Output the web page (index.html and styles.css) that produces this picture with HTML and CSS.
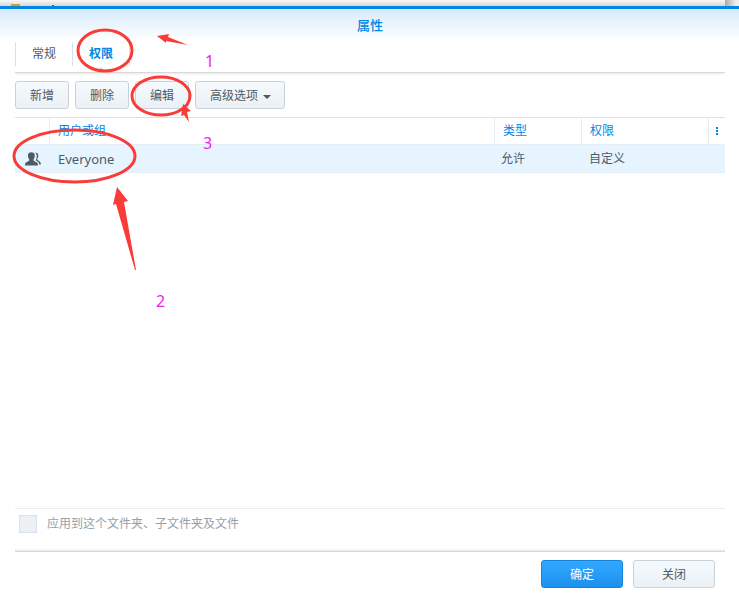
FILE: index.html
```html
<!DOCTYPE html>
<html lang="zh-CN">
<head>
<meta charset="utf-8">
<title>属性</title>
<link rel="stylesheet" href="styles.css">
</head>
<body>
<div class="backdrop"><svg class="backdrop-items" width="60" height="6" aria-hidden="true"><path d="M11 4h9v2h-9z" fill="#e39a1b"/><path d="M52 5h2v1h-2z" fill="#555"/></svg><span class="backdrop-edge"></span></div>
<main class="dialog">
  <h1 class="title">属性</h1>
  <nav class="tabs">
    <button class="tab" type="button">常规</button>
    <button class="tab active" type="button">权限</button>
  </nav>
  <div class="toolbar">
    <button class="btn" type="button">新增</button>
    <button class="btn" type="button">删除</button>
    <button class="btn" type="button">编辑</button>
    <button class="btn" type="button">高级选项<span class="caret"></span></button>
  </div>
  <section class="list">
    <table class="grid">
      <colgroup><col class="col-icon"><col><col class="col-type"><col class="col-perm"><col class="col-menu"></colgroup>
      <thead>
        <tr><th></th><th>用户或组</th><th>类型</th><th>权限</th><th class="menu-cell"><button class="menu" type="button" aria-label="列"><svg width="2" height="8" fill="#0086e5"><path d="M0 0h2v2H0zM0 3h2v2H0zM0 6h2v2H0z"/></svg></button></th></tr>
      </thead>
      <tbody>
        <tr><td class="icon-cell"><svg width="16" height="14" viewBox="0 0 16 14" fill="#505a64"><path d="M10 .8C11.800.2 13.200 1.300 13.200 3c0 .9.200 1.500-.1 2.300-.3.800-.8 1.100-.8 1.800 0 .8.400 1.100 1.200 1.600 1.300.7 2.300 1.300 2.300 3v.8h-1.600c-.1-1.700-1-2.700-2.700-3.700l-.9-.6c.9-1.300 1.300-2.700 1.200-4.200-.1-1.400-.8-2.500-1.800-3.200z"/><path d="M3 3C3 1.200 4.400.2 6.300.2S9.700 1.200 9.700 3v1.600c0 1.500-.9 2.300-1.200 3 0 .8.200 1.200 1 1.600 2 .9 3.500 1.500 3.500 3.800v.6H0V13c0-2.300 1.400-2.900 3.300-3.800.8-.4 1-.8 1-1.600C4 6.900 3 6.100 3 4.600z"/></svg></td><td>Everyone</td><td>允许</td><td>自定义</td><td></td></tr>
      </tbody>
    </table>
  </section>
  <div class="apply">
    <input type="checkbox" id="apply" disabled>
    <label for="apply">应用到这个文件夹、子文件夹及文件</label>
  </div>
  <footer class="footer">
    <button class="btn wide primary" type="button">确定</button>
    <button class="btn wide" type="button">关闭</button>
  </footer>
</main>
<svg class="marks" width="300" height="320" viewBox="0 0 300 320">
  <g fill="none" stroke="#fa3c38" stroke-width="3">
    <ellipse cx="105" cy="50.500" rx="27" ry="20.500"/>
    <ellipse cx="161" cy="96" rx="29" ry="19"/>
    <ellipse cx="74.500" cy="156" rx="60.500" ry="26"/>
  </g>
  <g fill="#fa3c38">
    <path d="M157 36 169 34 168 37 188 45 166 41 166 43z"/>
    <path d="M183 104 191 111 187 112 189 122 184 115 181 116z"/>
    <path d="M117 187 128 201 124 202 136 270 135 270 116 204 113 205z"/>
  </g>
  <g class="mark-text" fill="#f020f0">
    <text x="205" y="67">1</text>
    <text x="156" y="307">2</text>
    <text x="203" y="149">3</text>
  </g>
</svg>
</body>
</html>
```
FILE: styles.css
```css
* { box-sizing: border-box; }
body {
  margin: 0;
  min-height: 100vh;
  display: flex;
  flex-direction: column;
  background: #fff;
  color: #505a64;
  font: 13px/20px "Noto Sans", "Noto Sans CJK SC", sans-serif;
}
button { font: inherit; color: inherit; }
.backdrop {
  height: 6px;
  display: flex;
  justify-content: space-between;
  background: linear-gradient(#f8f8f8, #d8d8d8);
}
.backdrop-items { display: block; }
.backdrop-edge { width: 14px; background: linear-gradient(90deg, #aaa, #f0f0f0 80%); }
.dialog {
  flex: 1;
  display: flex;
  flex-direction: column;
  padding: 0 14px 8px 15px;
  border-top: 3px solid #0086e5;
  background: linear-gradient(#d7eafa, #fff 32px);
}
.title {
  margin: 0;
  padding: 6px 0 5px;
  text-align: center;
  color: #0086e5;
  font-size: 13px;
  font-weight: 500;
}
.tabs {
  display: flex;
  height: 33px;
  padding: 2px 0 6px;
  border-bottom: 1px solid #d8d8d8;
  box-shadow: 0 2px 2px -1px #e8e8e8;
}
.tab {
  position: relative;
  width: 57px;
  padding: 0;
  border: 0;
  border-left: 1px solid #d5e1ec;
  background: none;
  font-size: 12px;
}
.tab.active {
  width: 58px;
  border-right: 1px solid #d5e1ec;
  color: #0086e5;
  font-weight: 700;
}
.tab.active::after {
  content: "";
  position: absolute;
  left: 24px;
  bottom: -5px;
  border: 4px solid transparent;
  border-top: 0;
  border-bottom-color: #d8d8d8;
}
.toolbar {
  display: flex;
  gap: 6px;
  padding: 8px 0;
}
.btn {
  height: 28px;
  padding: 2px 14px 0;
  border: 1px solid #c8d2dc;
  border-radius: 3px;
  background: linear-gradient(#f5faff, #ebf0f5);
  font-size: 12px;
}
.caret {
  display: inline-block;
  margin-left: 5px;
  border: 4px solid transparent;
  border-top-color: #505a64;
  border-bottom: 0;
  margin-right: -1px;
  vertical-align: middle;
}
.list { flex: 1; }
.grid {
  width: 100%;
  table-layout: fixed;
  border-collapse: separate;
  border-spacing: 0;
}
.col-icon { width: 34px; }
.col-type { width: 87px; }
.col-perm { width: 127px; }
.col-menu { width: 17px; }
.grid th {
  height: 28px;
  padding: 0 8px;
  border: solid #e6eef5;
  border-top-color: #d5e1ec;
  border-width: 1px 0 1px 1px;
  text-align: left;
  color: #0086e5;
  font-size: 12px;
  font-weight: 400;
}
.grid th:first-child { border-left: 0; }
.grid td {
  height: 28px;
  padding: 0 7px;
  background: #e6f4ff;
  border-bottom: 1px solid #e6eef5;
  font-size: 12px;
}
.grid td:nth-child(2) { padding-left: 9px; font-size: 13px; }
.grid td:nth-child(4) { padding-left: 8px; }
.grid .icon-cell { padding: 0 10px; }
.grid .menu-cell { padding: 0; text-align: center; }
.icon-cell svg { display: block; }
.menu { display: block; width: 100%; padding: 0; border: 0; background: none; line-height: 0; }
.apply {
  display: flex;
  align-items: center;
  gap: 10px;
  height: 44px;
  padding: 0 4px 12px;
  border-top: 1px solid #e6eef5;
  border-bottom: 1px solid #d8d8d8;
  box-shadow: inset 0 -2px 2px -1px #e8e8e8;
  color: #96a0aa;
  font-size: 12px;
}
.apply input {
  appearance: none;
  width: 18px;
  height: 18px;
  margin: 0;
  border: 1px solid #d5e1ec;
  background: #ebf0f5;
}
.footer {
  display: flex;
  justify-content: flex-end;
  gap: 10px;
  padding: 8px 10px 0;
}
.wide { width: 82px; }
.primary {
  border-color: #1485dc;
  background: linear-gradient(#32a8ff, #1c92ee);
  color: #fff;
}
.marks {
  position: absolute;
  top: 0;
  left: 0;
  pointer-events: none;
}
.mark-text { font: 16px "Noto Sans", sans-serif; }
```
